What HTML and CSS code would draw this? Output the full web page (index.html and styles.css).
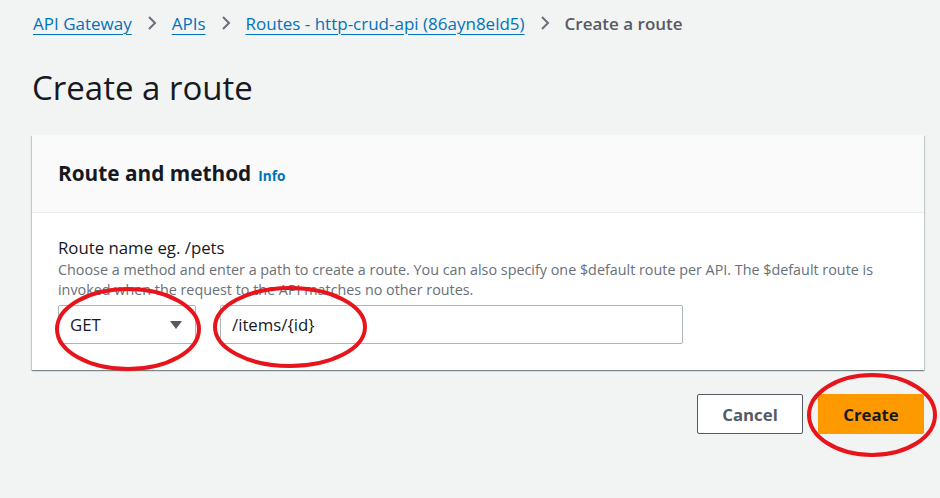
FILE: index.html
```html
<!DOCTYPE html>
<html>
<head>
<meta charset="utf-8">
<link rel="stylesheet" href="styles.css">
</head>
<body>
<div class="page">
  <nav class="crumbs">
    <a class="crumb" href="#">API Gateway</a>
    <svg class="sep" width="12" height="16" viewBox="0 0 12 16"><path d="M3 2 L9 8 L3 14" fill="none" stroke="#687078" stroke-width="2"/></svg>
    <a class="crumb" href="#">APIs</a>
    <svg class="sep" width="12" height="16" viewBox="0 0 12 16"><path d="M3 2 L9 8 L3 14" fill="none" stroke="#687078" stroke-width="2"/></svg>
    <a class="crumb" href="#">Routes - http-crud-api (86ayn8eld5)</a>
    <svg class="sep" width="12" height="16" viewBox="0 0 12 16"><path d="M3 2 L9 8 L3 14" fill="none" stroke="#687078" stroke-width="2"/></svg>
    <span class="current">Create a route</span>
  </nav>
  <h1 class="title">Create a route</h1>
  <section class="card">
    <header class="card-head">
      <h2 class="card-title">Route and method</h2>
      <a class="info" href="#">Info</a>
    </header>
    <div class="card-body">
      <div class="label">Route name eg. /pets</div>
      <div class="desc">Choose a method and enter a path to create a route. You can also specify one $default route per API. The $default route is invoked when the request to the API matches no other routes.</div>
      <div class="row">
        <div class="select">
          <span>GET</span>
          <svg width="14" height="10" viewBox="0 0 14 10"><path d="M1 1 H13 L7 9 Z" fill="#545b64"/></svg>
        </div>
        <div class="input">/items/{id}</div>
      </div>
    </div>
  </section>
  <div class="actions">
    <button class="btn cancel">Cancel</button>
    <button class="btn create">Create</button>
  </div>
</div>
<svg class="marks" width="940" height="498" viewBox="0 0 940 498">
  <ellipse cx="128" cy="329" rx="71" ry="40" fill="none" stroke="#e8141c" stroke-width="4"/>
  <ellipse cx="290" cy="327" rx="75" ry="39" fill="none" stroke="#e8141c" stroke-width="4"/>
  <ellipse cx="872" cy="415" rx="63" ry="40" fill="none" stroke="#e8141c" stroke-width="4"/>
</svg>
</body>
</html>
```

FILE: styles.css
```css
html, body {
  margin: 0;
  padding: 0;
  background: #f2f3f3;
  font-family: "Open Sans", "Noto Sans", sans-serif;
  color: #16191f;
}
body {
  position: relative;
  width: 940px;
  height: 498px;
  overflow: hidden;
}
.page {
  padding: 10px 16px 0 32px;
}
.crumbs {
  display: flex;
  align-items: center;
  gap: 14px;
  height: 26px;
  font-size: 17px;
  padding-left: 1px;
}
.crumb {
  color: #0073bb;
  text-decoration: underline;
  text-underline-offset: 4px;
  text-decoration-thickness: 1px;
}
.sep { flex: none; }
.current {
  color: #545b64;
  font-weight: 600;
}
.title {
  margin: 30px 0 0 0;
  font-size: 33px;
  font-weight: 400;
  line-height: 44px;
  height: 44px;
}
.card {
  margin-top: 25px;
  width: 892px;
  background: #fff;
  box-shadow: 0 1px 1px 0 rgba(0,28,36,.3), 1px 1px 1px 0 rgba(0,28,36,.15), -1px 1px 1px 0 rgba(0,28,36,.15);
}
.card-head {
  display: flex;
  align-items: baseline;
  gap: 7px;
  height: 78px;
  box-sizing: border-box;
  padding: 24px 26px 0 26px;
  background: #fafafa;
  border-bottom: 1px solid #eaeded;
}
.card-title {
  margin: 0;
  font-size: 20.8px;
  font-weight: 700;
  line-height: 28px;
}
.info {
  color: #0073bb;
  font-size: 13.6px;
  font-weight: 700;
  text-decoration: none;
}
.card-body {
  padding: 24px 26px 26px 26px;
}
.label {
  font-size: 16.8px;
  line-height: 22px;
}
.desc {
  font-size: 14.35px;
  line-height: 20px;
  color: #687078;
  margin-top: 1px;
}
.row {
  display: flex;
  gap: 24px;
  margin-top: 5px;
}
.select, .input {
  box-sizing: border-box;
  height: 39px;
  border: 1px solid #aab7b8;
  border-radius: 2px;
  display: flex;
  align-items: center;
  font-size: 16.8px;
  background: #fff;
}
.select {
  width: 138px;
  justify-content: space-between;
  padding: 0 12px 0 11px;
}
.input {
  width: 463px;
  padding: 0 11px;
}
.actions {
  display: flex;
  justify-content: flex-end;
  gap: 15px;
  margin-top: 24px;
  width: 892px;
}
.btn {
  box-sizing: border-box;
  height: 40px;
  width: 106px;
  border-radius: 2px;
  font-family: "Open Sans", "Noto Sans", sans-serif;
  font-size: 16.8px;
  font-weight: 700;
  cursor: pointer;
}
.cancel {
  background: #fff;
  border: 1px solid #545b64;
  color: #545b64;
}
.create {
  background: #ff9900;
  border: 1px solid #ff9900;
  color: #16191f;
}
.marks {
  position: absolute;
  left: 0;
  top: 0;
  pointer-events: none;
}
```
